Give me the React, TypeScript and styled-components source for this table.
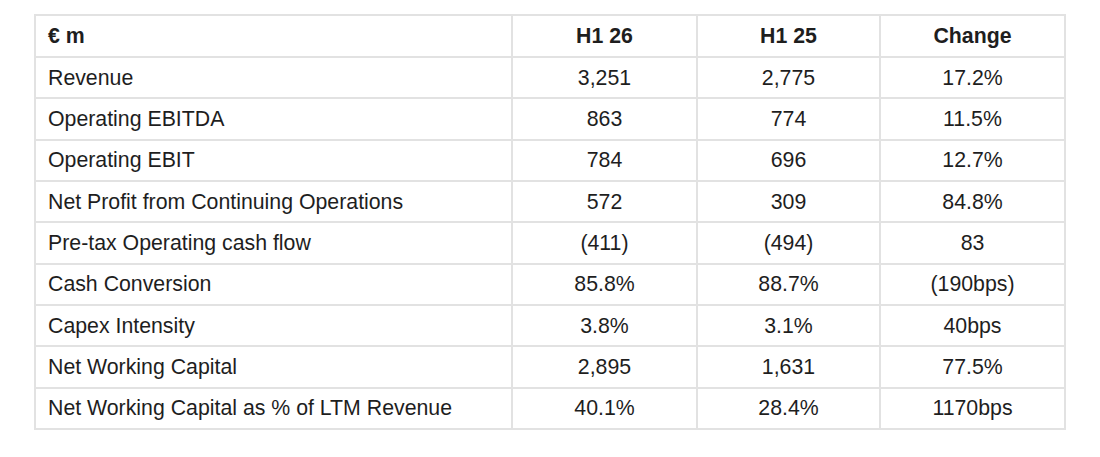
import React from 'react'
import styled, { createGlobalStyle } from 'styled-components'

const GlobalStyle = createGlobalStyle`
  html, body {
    margin: 0;
    padding: 0;
    background: #fff;
  }
  body {
    font-family: "Liberation Sans", Arial, sans-serif;
    color: #222;
  }
`

type Row = { label: string, h126: string, h125: string, change: string }

const rows: Row[] = [
  { label: 'Revenue', h126: '3,251', h125: '2,775', change: '17.2%' },
  { label: 'Operating EBITDA', h126: '863', h125: '774', change: '11.5%' },
  { label: 'Operating EBIT', h126: '784', h125: '696', change: '12.7%' },
  { label: 'Net Profit from Continuing Operations', h126: '572', h125: '309', change: '84.8%' },
  { label: 'Pre-tax Operating cash flow', h126: '(411)', h125: '(494)', change: '83' },
  { label: 'Cash Conversion', h126: '85.8%', h125: '88.7%', change: '(190bps)' },
  { label: 'Capex Intensity', h126: '3.8%', h125: '3.1%', change: '40bps' },
  { label: 'Net Working Capital', h126: '2,895', h125: '1,631', change: '77.5%' },
  { label: 'Net Working Capital as % of LTM Revenue', h126: '40.1%', h125: '28.4%', change: '1170bps' },
]

const Page = styled.div`
  padding: 14px 0 0 34px;
`

const Table = styled.table`
  border-collapse: collapse;
  table-layout: fixed;
  width: 1030px;
  font-size: 21.3px;
  line-height: 24px;
`

const Col = styled.col<{ $w: number }>`
  width: ${({ $w }) => $w}px;
`

const HeadRow = styled.tr`
  height: 42px;
`

const BodyRow = styled.tr`
  height: 41.35px;
`

const Cell = styled.td<{ $head?: boolean, $left?: boolean }>`
  border: 2px solid #e2e2e2;
  padding: 0 12px;
  vertical-align: middle;
  text-align: ${({ $left }) => ($left ? 'left' : 'center')};
  font-weight: ${({ $head }) => ($head ? 'bold' : 'normal')};
  white-space: nowrap;
  color: #1e1e1e;
`

export default function App() {
  return (
    <Page>
      <GlobalStyle />
      <Table>
        <colgroup>
          <Col $w={ 477 } />
          <Col $w={ 185 } />
          <Col $w={ 183 } />
          <Col $w={ 185 } />
        </colgroup>
        <thead>
          <HeadRow>
            <Cell as="th" $head $left>€ m</Cell>
            <Cell as="th" $head>H1 26</Cell>
            <Cell as="th" $head>H1 25</Cell>
            <Cell as="th" $head>Change</Cell>
          </HeadRow>
        </thead>
        <tbody>
          { rows.map((r) => (
            <BodyRow key={ r.label }>
              <Cell $left>{ r.label }</Cell>
              <Cell>{ r.h126 }</Cell>
              <Cell>{ r.h125 }</Cell>
              <Cell>{ r.change }</Cell>
            </BodyRow>
          )) }
        </tbody>
      </Table>
    </Page>
  )
}
